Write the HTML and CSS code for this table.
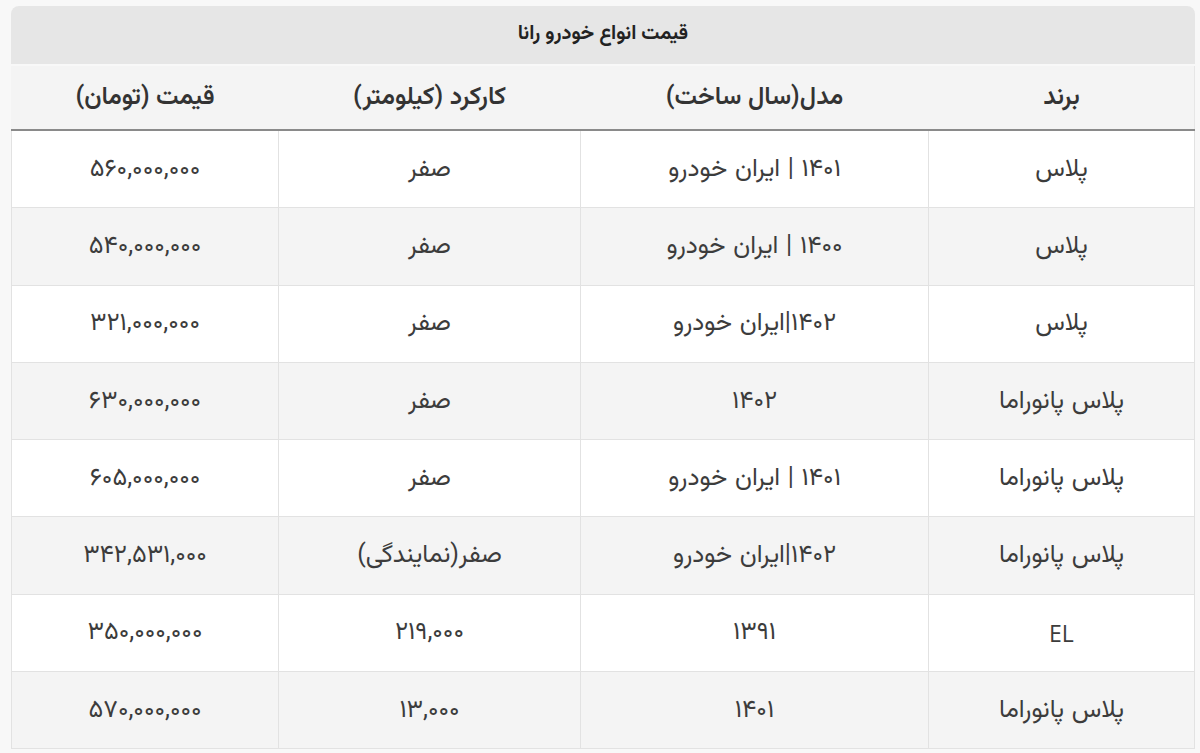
FILE: index.html
```html
<!DOCTYPE html>
<html lang="fa" dir="rtl">
<head>
<meta charset="utf-8">
<title>قیمت انواع خودرو رانا</title>
<link rel="stylesheet" href="styles.css">
</head>
<body>
<div class="wrap">
  <table class="tbl">
    <caption class="cap">قیمت انواع خودرو رانا</caption>
    <colgroup>
      <col class="c1"><col class="c2"><col class="c3"><col class="c4">
    </colgroup>
    <thead>
      <tr><th>برند</th><th>مدل(سال ساخت)</th><th>کارکرد (کیلومتر)</th><th>قیمت (تومان)</th></tr>
    </thead>
    <tbody>
      <tr><td>پلاس</td><td>۱۴۰۱ | ایران خودرو</td><td>صفر</td><td>۵۶۰,۰۰۰,۰۰۰</td></tr>
      <tr><td>پلاس</td><td>۱۴۰۰ | ایران خودرو</td><td>صفر</td><td>۵۴۰,۰۰۰,۰۰۰</td></tr>
      <tr><td>پلاس</td><td>۱۴۰۲|ایران خودرو</td><td>صفر</td><td>۳۲۱,۰۰۰,۰۰۰</td></tr>
      <tr><td>پلاس پانوراما</td><td>۱۴۰۲</td><td>صفر</td><td>۶۳۰,۰۰۰,۰۰۰</td></tr>
      <tr><td>پلاس پانوراما</td><td>۱۴۰۱ | ایران خودرو</td><td>صفر</td><td>۶۰۵,۰۰۰,۰۰۰</td></tr>
      <tr><td>پلاس پانوراما</td><td>۱۴۰۲|ایران خودرو</td><td>صفر(نمایندگی)</td><td>۳۴۲,۵۳۱,۰۰۰</td></tr>
      <tr><td class="latin">EL</td><td>۱۳۹۱</td><td>۲۱۹,۰۰۰</td><td>۳۵۰,۰۰۰,۰۰۰</td></tr>
      <tr><td>پلاس پانوراما</td><td>۱۴۰۱</td><td>۱۳,۰۰۰</td><td>۵۷۰,۰۰۰,۰۰۰</td></tr>
    </tbody>
  </table>
</div>
</body>
</html>
```
FILE: styles.css
```css
html, body {
  margin: 0;
  padding: 0;
  background: #f8f8f8;
}
body {
  font-family: "Vazirmatn", "Noto Sans Arabic", "DejaVu Sans", sans-serif;
  color: #333;
}
.wrap {
  padding: 6px 5px 0 12px;
}
.tbl {
  width: 1183px;
  border-collapse: collapse;
  table-layout: fixed;
  background: #fff;
}
.c1 { width: 266px; }
.c2 { width: 348px; }
.c3 { width: 302px; }
.c4 { width: 267px; }
.cap {
  background: #e6e6e6;
  border-radius: 8px 8px 0 0;
  height: 58px;
  line-height: 56px;
  font-size: 20px;
  font-weight: 700;
  color: #222;
  margin-bottom: 2px;
}
.tbl th {
  background: #f4f4f4;
  height: 63px;
  padding: 0;
  font-size: 25px;
  font-weight: 600;
  color: #333;
  border-bottom: 2px solid #8a8a8a;
  border-left: 1px solid #f4f4f4;
  border-right: 1px solid #e6e6e6;
}
.tbl td {
  height: 76.3px;
  padding: 0;
  text-align: center;
  font-size: 25px;
  word-spacing: 1px;
  color: #3c3c3c;
  border: 1px solid #e2e2e2;
}
.tbl tbody tr:nth-child(even) td {
  background: #f4f4f4;
}
.tbl td.latin {
  font-family: "Open Sans", "DejaVu Sans", sans-serif;
  font-size: 23px;
}
```
